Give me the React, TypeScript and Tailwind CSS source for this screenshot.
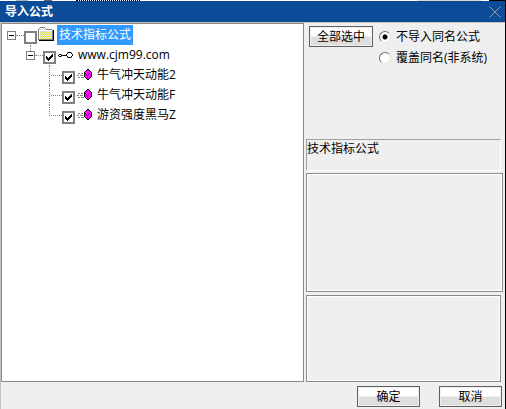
import { useState } from "react";
import { clsx } from "clsx";

const formulas = ["牛气冲天动能2", "牛气冲天动能F", "游资强度黑马Z"];

function FolderIcon() {
  return (
    <svg width="16" height="15" shapeRendering="crispEdges" aria-hidden="true">
      <defs>
        <pattern id="dither" width="2" height="2" patternUnits="userSpaceOnUse">
          <path d="M0 0h2v2H0z" fill="#ffff70" />
          <path d="M0 0h1v1H0zM1 1h1v1H1z" fill="#cccccc" />
        </pattern>
      </defs>
      <path d="M15 3h1v11h-1zM1 13h15v1H1z" fill="#000" />
      <path d="M2 0h5v1H2zM1 1h1v1H1zM7 1h1v1H7zM0 2h1v11H0zM8 2h6v1H8zM14 3h1v10h-1zM0 12h15v1H0z" fill="#808080" />
      <path d="M2 1h5v1H2zM1 2h7v1H1zM1 3h13v9H1z" fill="url(#dither)" />
      <path d="M2 1h5v1H2zM1 2h1v10H1zM2 3h12v1H2z" fill="#fff" />
    </svg>
  );
}

function KeyIcon() {
  return (
    <svg width="16" height="9" shapeRendering="crispEdges" fill="#000" aria-hidden="true">
      <path d="M1 3h2v1H1zM0 4h1v1H0zM1 5h2v1H1zM3 4h6v1H3zM10 1h3v1h-3zM9 2h1v1H9zM13 2h1v1h-1zM8 3h1v2H8zM14 3h1v2h-1zM9 5h1v1H9zM13 5h1v1h-1zM10 6h3v1h-3z" />
      <path d="M3 3h1v1H3zM3 5h1v1H3zM9 1h1v1H9zM13 1h1v1h-1zM9 6h1v1H9zM13 6h1v1h-1z" fill="#808080" />
    </svg>
  );
}

function FormulaIcon() {
  return (
    <svg width="16" height="11" shapeRendering="crispEdges" aria-hidden="true">
      <path d="M1 4h2v1H1zM4 4h2v1H4zM0 6h2v1H0zM3 6h3v1H3zM1 8h2v1H1zM4 8h3v1H4z" fill="#808080" />
      <path d="M10 0h2v1h1v1h1v1h1v5h-1v1h-1v1h-1v1h-2v-1H9V9H8V8H7V3h1V2h1V1h1z" fill="#000" />
      <path d="M10 1h2v1h1v1h1v5h-1v1h-1v1h-2V9H9V8H8V3h1V2h1z" fill="#ff00ff" />
      <path d="M8 4h1v1H8zM9 5h1v1H9zM10 6h1v3h-1zM11 5h1v1h-1zM12 4h1v1h-1z" fill="#800080" />
    </svg>
  );
}

function Expander({ nested, open, onClick }: { nested?: boolean; open: boolean; onClick: () => void }) {
  return (
    <div className="flex h-5 items-start">
      <div className="flex flex-col items-center">
        <div className={clsx("h-1.5 w-px", nested && "border-l border-dotted border-[#808080]")} />
        <button
          type="button"
          aria-label={open ? "折叠" : "展开"}
          onClick={onClick}
          className="flex size-[9px] items-center justify-center border border-[#808080] bg-white"
        >
          <span className="h-px w-[5px] bg-black" />
        </button>
      </div>
      <div className="mt-2.5 w-2 border-t border-dotted border-[#808080]" />
    </div>
  );
}

function TreeCheck({ label, defaultChecked }: { label: string; defaultChecked?: boolean }) {
  return (
    <span className="mt-1.5 grid size-[13px] shrink-0">
      <input
        type="checkbox"
        aria-label={label}
        defaultChecked={defaultChecked}
        className="peer col-start-1 row-start-1 size-[13px] appearance-none border-2 border-[#808080] bg-white"
      />
      <svg
        viewBox="0 0 13 13"
        shapeRendering="crispEdges"
        className="pointer-events-none invisible col-start-1 row-start-1 size-[13px] peer-checked:visible"
      >
        <path d="M3 5h1v3H3zM4 6h1v3H4zM5 7h1v3H5zM6 6h1v3H6zM7 5h1v3H7zM8 4h1v3H8zM9 3h1v3H9z" />
      </svg>
    </span>
  );
}

function PushButton({ children }: { children: string }) {
  return (
    <button
      type="button"
      className="flex h-[21px] min-w-[63px] items-center justify-center border border-[#606060] bg-linear-to-b from-white from-45% to-[#dedede] to-55% px-[7px] shadow-[inset_0_0_0_1px_#f0f0f0]"
    >
      {children}
    </button>
  );
}

function ModeRadio({ value, label, checked, onChange }: { value: string; label: string; checked: boolean; onChange: (value: string) => void }) {
  return (
    <label className="flex h-[21px] items-center gap-[5px]">
      <input
        type="radio"
        name="mode"
        value={value}
        checked={checked}
        onChange={() => onChange(value)}
        className="size-3 shrink-0 appearance-none rounded-full border border-t-[#707070] border-r-[#e3e3e3] border-b-[#e3e3e3] border-l-[#707070] bg-white checked:bg-[radial-gradient(circle,black_2px,white_3px)]"
      />
      <span className="whitespace-nowrap">{label}</span>
    </label>
  );
}

export default function App() {
  const [mode, setMode] = useState("skip");
  const [rootOpen, setRootOpen] = useState(true);
  const [groupOpen, setGroupOpen] = useState(true);

  return (
    <div className="flex min-h-screen flex-col border-r border-black bg-[#efefef] font-['Open_Sans','Noto_Sans_CJK_SC',sans-serif] text-[12px] leading-5 text-black">
      <div className="flex h-px bg-white">
        <div className="ml-4 w-3 bg-[#b0b0b0]" />
        <div className="ml-4 w-2 bg-[#606060]" />
        <div className="ml-6 w-16 border-t border-dotted border-black" />
        <div className="ml-auto w-16 bg-[#d8d8d0]" />
        <div className="ml-2 w-4 bg-black" />
      </div>
      <header className="flex h-[21px] items-center justify-between bg-[#0b4b98] pr-1 pl-[5px] text-white">
        <h1 className="font-semibold">导入公式</h1>
        <button type="button" aria-label="关闭" className="text-[#9a9a9a]">
          <svg width="12" height="12" stroke="currentColor" aria-hidden="true">
            <path d="M.5 .5l11 11M11.5 .5l-11 11" />
          </svg>
        </button>
      </header>

      <div className="flex flex-1 flex-col border-t border-l border-[#c5c1b8]">
        <main className="grid flex-1 grid-cols-[303fr_201fr]">
          <section className="border border-[#8a8a8a] bg-white pt-px pl-[5px]">
            <div className="flex items-start">
              <Expander open={rootOpen} onClick={() => setRootOpen(!rootOpen)} />
              <TreeCheck label="技术指标公式" />
              <span className="mt-0.5 ml-px">
                <FolderIcon />
              </span>
              <span className="ml-[3px] bg-[#3399ff] px-0.5 text-white">技术指标公式</span>
            </div>
            {rootOpen && (
              <div className="pl-[19px]">
                <div className="flex items-start">
                  <Expander nested open={groupOpen} onClick={() => setGroupOpen(!groupOpen)} />
                  <TreeCheck label="www.cjm99.com" defaultChecked />
                  <span className="mt-1.5 ml-0.5">
                    <KeyIcon />
                  </span>
                  <span className="ml-1">www.cjm99.com</span>
                </div>
                {groupOpen && (
                  <ul className="pl-[23px]">
                    {formulas.map((name, i) => (
                      <li key={name} className="flex h-5 items-start">
                        <div
                          className={clsx(
                            "flex w-[13px] border-l border-dotted border-[#808080]",
                            i === formulas.length - 1 ? "h-[11px]" : "h-5",
                          )}
                        >
                          <div className="mt-2.5 ml-px h-px flex-1 border-t border-dotted border-[#808080]" />
                        </div>
                        <TreeCheck label={name} defaultChecked />
                        <span className="mt-1 ml-0.5">
                          <FormulaIcon />
                        </span>
                        <span className="ml-1">{name}</span>
                      </li>
                    ))}
                  </ul>
                )}
              </div>
            )}
          </section>

          <section className="flex flex-col pl-0.5">
            <div className="flex min-h-[116px] items-start gap-1.5 pt-[3px] pl-[3px]">
              <PushButton>全部选中</PushButton>
              <div role="radiogroup" aria-label="同名公式处理">
                <ModeRadio value="skip" label="不导入同名公式" checked={mode === "skip"} onChange={setMode} />
                <ModeRadio value="overwrite" label="覆盖同名(非系统)" checked={mode === "overwrite"} onChange={setMode} />
              </div>
            </div>
            <div className="mr-1 h-8 border border-t-[#a0a0a0] border-r-white border-b-white border-l-[#a0a0a0] leading-[18px]">
              技术指标公式
            </div>
            <div className="mt-0.5 mr-0.5 flex-[119] border border-[#8a8a8a] shadow-[inset_0_0_0_1px_white]" />
            <div className="mt-[3px] mr-1 flex-[87] border border-[#8a8a8a] shadow-[inset_0_0_0_1px_white]" />
          </section>
        </main>

        <footer className="flex justify-end gap-[19px] pt-1 pr-[3px] pb-0.5">
          <PushButton>确定</PushButton>
          <PushButton>取消</PushButton>
        </footer>
      </div>
    </div>
  );
}
